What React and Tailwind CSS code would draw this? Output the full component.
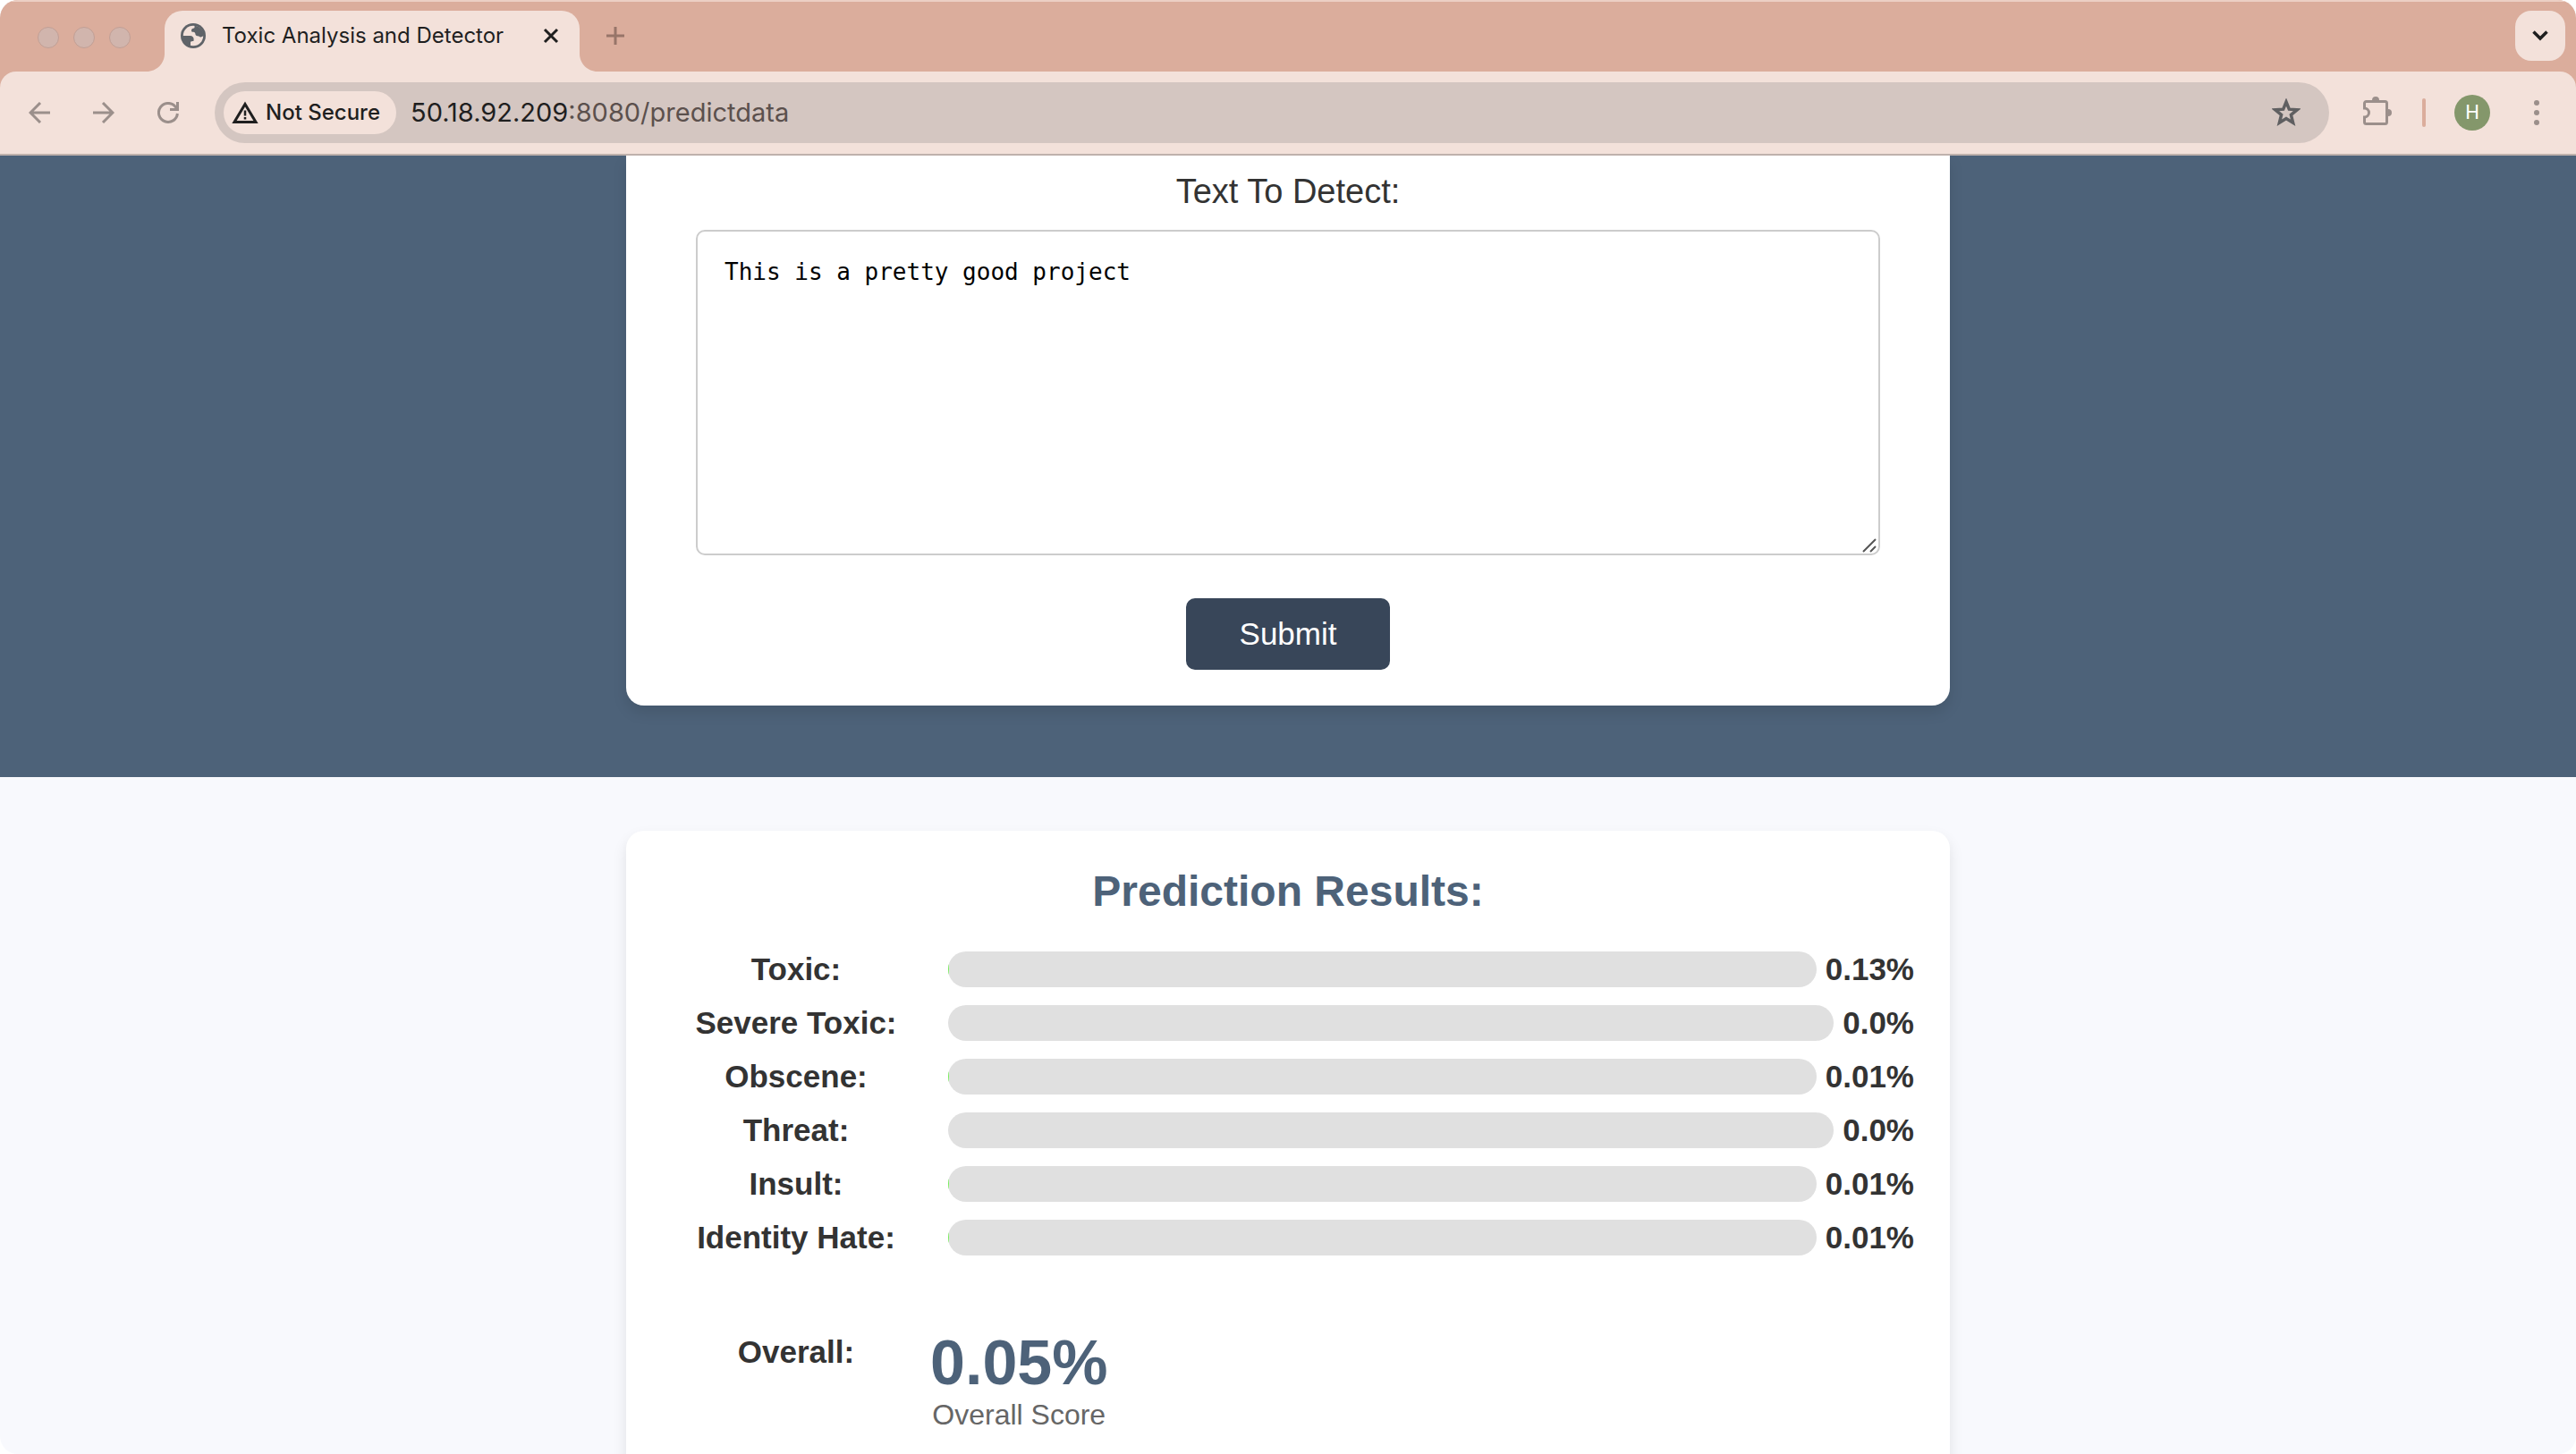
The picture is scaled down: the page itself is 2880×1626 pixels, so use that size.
import { useState } from "react";

const results = [
  { label: "Toxic:", value: "0.13%", share: 0.13 },
  { label: "Severe Toxic:", value: "0.0%", share: 0 },
  { label: "Obscene:", value: "0.01%", share: 0.01 },
  { label: "Threat:", value: "0.0%", share: 0 },
  { label: "Insult:", value: "0.01%", share: 0.01 },
  { label: "Identity Hate:", value: "0.01%", share: 0.01 },
];

function TabFoot({ className }) {
  return (
    <svg className={className} width="20" height="20" viewBox="0 0 20 20" aria-hidden="true">
      <path d="M20 0V20H0C11 20 20 11 20 0Z" fill="#f3e1da" />
    </svg>
  );
}

function TabStrip() {
  return (
    <div className="flex h-20 items-start border-t-2 border-[#eccfc4] bg-[#dbad9c] pr-3">
      <div className="flex h-20 items-center gap-4 pl-[42px]">
        <span className="size-6 rounded-full border border-[#c19f95] bg-[#d1b5ad]" />
        <span className="size-6 rounded-full border border-[#c19f95] bg-[#d1b5ad]" />
        <span className="size-6 rounded-full border border-[#c19f95] bg-[#d1b5ad]" />
      </div>
      <TabFoot className="ml-[18px] mt-[58px] shrink-0" />
      <div className="mt-[10px] flex h-[68px] w-[464px] items-start rounded-t-[20px] bg-[#f3e1da] px-[18px] pt-[12px]">
        <div className="flex h-8 w-full items-center">
          <svg width="28" height="28" viewBox="0 0 28 28" aria-hidden="true">
            <circle cx="14" cy="14" r="14" fill="#5f6368" />
            <circle cx="14" cy="14" r="11.200" fill="#f3e1da" />
            <path
              d="M15.500 2.500V5C15 6 12.600 5.600 12.200 7C11.800 8.600 12 9.700 13.200 9.700C15.300 9.700 16.200 10.200 16.300 11.600C16.500 13.400 17.200 14.300 19 14.300C21 14.300 21 15.600 22.500 15.400L26 14A12 12 0 0 0 15.500 2.500Z"
              fill="#5f6368"
            />
            <path
              d="M2 14H10.500C13.200 14 14.800 15.800 14.600 18V19.600C14.400 20.600 11 19.800 11 21.500V25.500C5 24.500 2 20 2 14Z"
              fill="#5f6368"
            />
          </svg>
          <span className="ml-[18px] whitespace-nowrap font-['Inter','Liberation_Sans',sans-serif] text-[24px] leading-8 text-[#1f1f1f]">
            Toxic Analysis and Detector
          </span>
          <button type="button" aria-label="Close tab" className="ml-auto mr-1">
            <svg width="20" height="20" viewBox="0 0 20 20" fill="none" stroke="#1f1f1f" strokeWidth="3">
              <path d="M3 3L17 17M17 3L3 17" />
            </svg>
          </button>
        </div>
      </div>
      <TabFoot className="mt-[58px] shrink-0 -scale-x-100" />
      <button type="button" aria-label="New tab" className="ml-[10px] mt-[28px]">
        <svg width="20" height="20" viewBox="0 0 20 20" fill="none" stroke="#977569" strokeWidth="3">
          <path d="M10 0V20M0 10H20" />
        </svg>
      </button>
      <button
        type="button"
        aria-label="Search tabs"
        className="ml-auto mt-[10px] flex size-14 items-center justify-center rounded-[18px] bg-[#f3e1da]"
      >
        <svg width="18" height="12" viewBox="0 0 18 12" fill="none" stroke="#1f1f1f" strokeWidth="3.500">
          <path d="M1.500 1.500L9 9L16.500 1.500" />
        </svg>
      </button>
    </div>
  );
}

function Toolbar() {
  return (
    <div className="bg-[#dbad9c]">
      <div className="flex h-[94px] items-center rounded-t-[18px] border-b-2 border-[#bfb1ac] bg-[#f3e1da] pl-8 pr-[41px]">
        <button type="button" aria-label="Back">
          <svg width="24" height="24" viewBox="0 0 24 24" fill="none" stroke="#9b8f8b" strokeWidth="3">
            <path d="M24 12H2M13 1L2 12L13 23" />
          </svg>
        </button>
        <button type="button" aria-label="Forward" className="ml-12">
          <svg width="24" height="24" viewBox="0 0 24 24" fill="none" stroke="#9b8f8b" strokeWidth="3">
            <path d="M0 12H22M11 1L22 12L11 23" />
          </svg>
        </button>
        <button type="button" aria-label="Reload" className="ml-12">
          <svg width="24" height="24" viewBox="0 0 24 24" fill="none" stroke="#9b8f8b" strokeWidth="3">
            <path d="M22.400 13A10.500 10.500 0 1 1 20 5.200L22.500 8.500M22.500 0V8.500H14" />
          </svg>
        </button>
        <div className="ml-10 flex h-[68px] flex-1 items-center rounded-full bg-[#d4c6c1] pl-[10px] pr-8 font-['Inter','Liberation_Sans',sans-serif]">
          <button type="button" className="flex h-12 items-center gap-2 rounded-full bg-[#f3e1da] pl-[9px] pr-[18px]">
            <svg width="30" height="26" viewBox="0 0 30 26" fill="none" stroke="#1f1f1f" aria-hidden="true">
              <path d="M15 3.500L27 23.500H3Z" strokeWidth="3" />
              <path d="M15 10.500V16.500M15 18V20.500" strokeWidth="2.500" />
            </svg>
            <span className="whitespace-nowrap text-[24px] font-medium leading-8 text-[#1f1f1f]">Not Secure</span>
          </button>
          <a href="#url" className="ml-4 whitespace-nowrap text-[29px] leading-9 text-[#5b504d]">
            <span className="text-[#1f1f1f]">50.18.92.209</span>:8080/predictdata
          </a>
          <button type="button" aria-label="Bookmark this tab" className="ml-auto">
            <svg width="32" height="32" viewBox="0 0 32 32" fill="none" stroke="#5f5f61" strokeWidth="3.500">
              <path d="M16 4L19.300 12.200L28.200 12.800L21.400 18.500L23.600 27.200L16 22.500L8.400 27.200L10.600 18.500L3.800 12.800L12.700 12.200Z" />
            </svg>
          </button>
        </div>
        <button type="button" aria-label="Extensions" className="ml-[38px]">
          <svg width="32" height="36" viewBox="0 0 32 36" fill="none" stroke="#9b8f8b" strokeWidth="3">
            <path d="M3.500 5.500H24.500A2 2 0 0 1 26.500 7.500V28.500A2 2 0 0 1 24.500 30.500H3.500A2 2 0 0 1 1.500 28.500V23A5 5 0 0 0 1.500 13V7.500A2 2 0 0 1 3.500 5.500Z" />
            <path d="M10 5V4A4 4 0 0 1 18 4V5ZM27 14H28A4 4 0 0 1 28 22H27Z" fill="#9b8f8b" stroke="none" />
          </svg>
        </button>
        <span className="ml-[34px] h-8 w-1 rounded-full bg-[#dbad9c]" />
        <button
          type="button"
          aria-label="Profile"
          className="ml-8 flex size-10 items-center justify-center rounded-full bg-[#84976b] font-['Roboto',sans-serif] text-[22px] leading-6 text-white"
        >
          H
        </button>
        <button type="button" aria-label="Menu" className="ml-[49px]">
          <svg width="6" height="28" viewBox="0 0 6 28" fill="#9b8f8b">
            <circle cx="3" cy="3" r="3" />
            <circle cx="3" cy="14" r="3" />
            <circle cx="3" cy="25" r="3" />
          </svg>
        </button>
      </div>
    </div>
  );
}

function DetectForm() {
  const [text, setText] = useState("This is a pretty good project");
  return (
    <section className="bg-[#4d6279] px-10 pb-20">
      <form
        className="mx-auto flex w-full max-w-[1480px] flex-col items-center rounded-b-[20px] bg-white px-[78px] pb-10 pt-4 shadow-[0_8px_16px_rgba(0,0,0,0.1)]"
        onSubmit={(e) => e.preventDefault()}
      >
        <label htmlFor="text" className="text-[38px] leading-[48px] text-[#333333]">
          Text To Detect:
        </label>
        <textarea
          id="text"
          value={text}
          onChange={(e) => setText(e.target.value)}
          className="mt-[19px] h-[364px] w-full resize-none rounded-[10px] border-2 border-[#cccccc] p-[30px] font-['DejaVu_Sans_Mono',monospace] text-[26px] leading-[30px] text-black"
        />
        <svg className="-mt-[19px] mr-1 self-end" width="16" height="16" viewBox="0 0 16 16" stroke="#555555" strokeWidth="2" aria-hidden="true">
          <path d="M1 15L15 1M9 15L15 9" />
        </svg>
        <button type="submit" className="mt-[51px] h-20 rounded-[10px] bg-[#384659] px-[60px] text-[35px] leading-10 text-white">
          Submit
        </button>
      </form>
    </section>
  );
}

function Results() {
  return (
    <section className="px-10 pt-[60px]">
      <div className="mx-auto w-full max-w-[1480px] rounded-[20px] bg-white px-10 pb-20 pt-10 shadow-[0_8px_16px_rgba(0,0,0,0.1)]">
        <h2 className="text-center text-[48px] font-bold leading-[56px] text-[#4d6279]">Prediction Results:</h2>
        <ul className="mt-[39px] flex flex-col gap-5">
          {results.map((r) => (
            <li key={r.label} className="flex h-10 items-center text-[35px] font-bold leading-10 text-[#333333]">
              <span className="w-[300px] text-center">{r.label}</span>
              <span className="ml-5 h-10 flex-1 overflow-hidden rounded-full bg-[#e0e0e0]">
                <span className="block h-full bg-[#76ee59]" style={{ width: `${r.share}%` }} />
              </span>
              <span className="ml-[10px]">{r.value}</span>
            </li>
          ))}
        </ul>
        <div className="mt-20 flex items-start">
          <span className="mt-2 w-[300px] text-center text-[35px] font-bold leading-10 text-[#333333]">Overall:</span>
          <div className="flex flex-col items-center">
            <span className="text-[70px] font-bold leading-[80px] text-[#4d6279]">0.05%</span>
            <span className="text-[32px] leading-9 text-[#666666]">Overall Score</span>
          </div>
        </div>
      </div>
    </section>
  );
}

export default function App() {
  return (
    <div className="h-screen bg-white">
      <div className="flex h-full flex-col overflow-hidden rounded-[20px] bg-[#f8f9fd] font-['Liberation_Sans',Arial,sans-serif]">
        <header className="shrink-0">
          <TabStrip />
          <Toolbar />
        </header>
        <main className="min-h-0 flex-1 overflow-hidden">
          <DetectForm />
          <Results />
        </main>
      </div>
    </div>
  );
}
